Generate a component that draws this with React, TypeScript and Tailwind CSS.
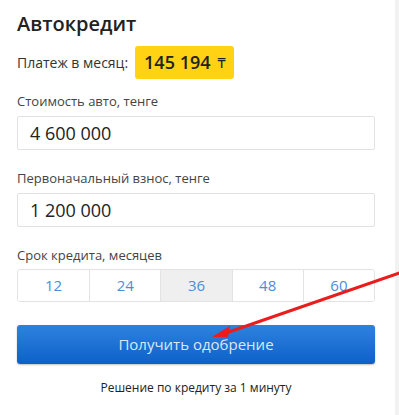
const terms = [12, 24, 36, 48, 60];

const Field = ({ label, value }: { label: string; value: string }) => (
  <div>
    <div className="text-[13px] leading-[18px] text-[#444]">{label}</div>
    <div className="mt-[6px] h-[34px] border border-[#e2e2e2] rounded-[2px] flex items-center px-[12px] text-[18px] text-[#222]">
      {value}
    </div>
  </div>
);

export default function App() {
  return (
    <div
      className="relative w-[399px] h-[415px] bg-white flex overflow-hidden"
      style={{ fontFamily: '"Open Sans", "Noto Sans", sans-serif' }}
    >
      <div className="w-[395px] pl-[17px] pr-[20px] pt-[10px]">
        <h1 className="text-[20px] leading-[27px] font-semibold text-[#222]">Автокредит</h1>

        {/* monthly payment */}
        <div className="mt-[9px] flex items-center gap-[7px]">
          <span className="text-[14px] text-[#333]">Платеж в месяц:</span>
          <span className="h-[33px] rounded-[3px] bg-[#ffd314] pl-[9px] pr-[8px] flex items-center text-[18px] font-semibold text-[#222]">
            145 194 <span className="ml-[7px] text-[15px] font-normal">₸</span>
          </span>
        </div>

        <div className="mt-[13px] flex flex-col gap-[19px]">
          <Field label="Стоимость авто, тенге" value="4 600 000" />
          <Field label="Первоначальный взнос, тенге" value="1 200 000" />
          <div>
            <div className="text-[13px] leading-[18px] text-[#444]">Срок кредита, месяцев</div>
            <div className="mt-[5px] h-[33px] grid grid-cols-5 border border-[#e3e3e3] rounded-[3px] overflow-hidden">
              {terms.map((t, i) => (
                <div
                  key={t}
                  className={
                    "flex items-center justify-center text-[15px] text-[#4a8ddb] " +
                    (i > 0 ? "border-l border-[#e3e3e3] " : "") +
                    (t === 36 ? "bg-[#efefef]" : "bg-white")
                  }
                >
                  {t}
                </div>
              ))}
            </div>
          </div>
        </div>

        <button className="mt-[23px] w-full h-[39px] rounded-[3px] bg-gradient-to-b from-[#2e82de] to-[#0b61c9] shadow-[0_1px_2px_rgba(0,0,0,0.25)] text-[15px] text-[#dbe7f6]">
          Получить одобрение
        </button>

        <p className="mt-[15px] text-center text-[12px] text-[#222]">Решение по кредиту за 1 минуту</p>
      </div>
      <div className="w-[4px] bg-[#f2f2f2]" />

      {/* red annotation arrow */}
      <svg className="absolute inset-0 pointer-events-none" width="399" height="415">
        <line x1="402" y1="272" x2="226" y2="333" stroke="#ea1c1c" strokeWidth="3" strokeLinecap="round" />
        <polygon points="212,337 230,326 228,337" fill="#ea1c1c" />
      </svg>
    </div>
  );
}
